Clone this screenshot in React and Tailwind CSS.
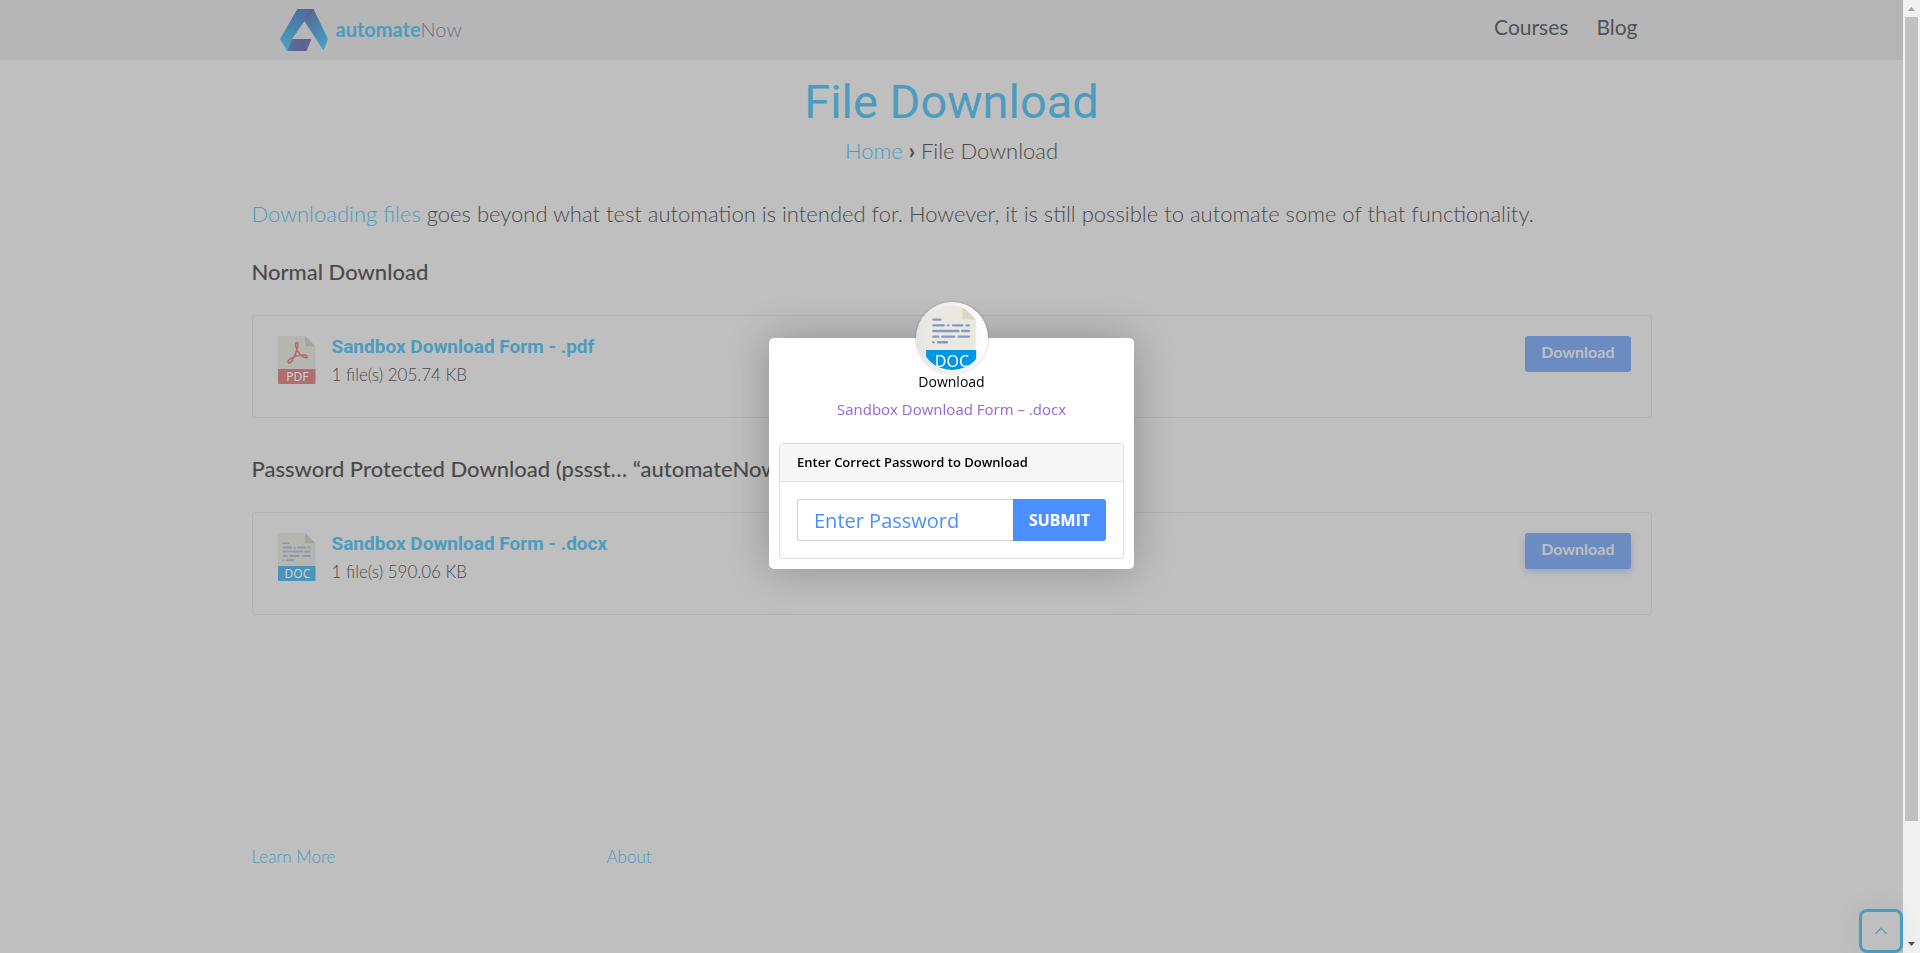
import React from 'react';

const lineRows = [
  'M5.4 10.2H10.6',
  'M5.4 14.5H13.2 M16.4 14.5H16.7 M20.2 14.5H27 M30.2 14.5H32',
  'M5.4 18.7H24.2 M27 18.7H32',
  'M5.4 23H9 M12.2 23H21 M24.4 23H32',
  'M5.4 27.2H5.5 M8.9 27.2H15.6',
];

function FileIcon({ kind, muted, className }) {
  const doc = kind === 'DOC';
  const paper = muted ? '#b5b6af' : '#e9e9e0';
  const fold = muted ? '#a5a49b' : '#d9d7ca';
  const ink = doc ? (muted ? '#8f96b0' : '#8697cb') : '#b66a6c';
  const band = doc ? (muted ? '#4b93ba' : '#0096e6') : '#b06e70';
  const label = muted ? '#cdd2d3' : '#ffffff';
  return (
    <svg viewBox="0 0 38 48" className={className} aria-hidden="true">
      <path d="M1.2 0H27.2L37.2 10.2V34H0V1.2Q0 0 1.2 0Z" fill={paper} />
      <path d="M27.2 0L37.2 10.2H27.2Z" fill={fold} />
      <path d="M0 33H37.5V46.8Q37.5 48 36.3 48H1.2Q0 48 0 46.8Z" fill={band} />
      {doc ? (
        <g stroke={ink} strokeWidth="1.8" strokeLinecap="round">
          {lineRows.map((d) => (
            <path key={d} d={d} />
          ))}
        </g>
      ) : (
        <path
          d="M19 6.6C17.4 6.6 17.3 8.4 17.9 10.6C18.6 14 21 17.6 24 20.1C25.8 21.5 28.6 22.2 29.1 20.9C29.5 19.5 26.7 18.7 23.8 19C19.8 19.3 15.6 20.7 12.8 22.4C10.8 23.7 9.7 25.4 10.2 26.5C10.9 27.9 13 26.8 14.4 24.1C16.2 20.9 18.6 15.6 19.5 11.6C20.1 9 20.3 6.8 19 6.6Z"
          fill="none"
          stroke={ink}
          strokeWidth="1.6"
          strokeLinejoin="round"
        />
      )}
      <text x="19.4" y="45.4" textAnchor="middle" fontSize="12" fontFamily="'Noto Sans', sans-serif" fill={label}>
        {kind}
      </text>
    </svg>
  );
}

function Logo() {
  return (
    <a href="#home" className="flex items-center gap-2">
      <svg viewBox="0 0 48 42" className="h-[42px] w-12" aria-hidden="true">
        <defs>
          <linearGradient id="armLeft" x1="0.7" y1="0" x2="0.2" y2="1">
            <stop offset="0" stopColor="#4c6e9c" />
            <stop offset="0.5" stopColor="#4787af" />
            <stop offset="1" stopColor="#4ba0c1" />
          </linearGradient>
          <linearGradient id="armRight" x1="0.2" y1="0" x2="0.7" y2="1">
            <stop offset="0" stopColor="#5c6492" />
            <stop offset="0.35" stopColor="#4c7ba6" />
            <stop offset="1" stopColor="#4a9fc1" />
          </linearGradient>
          <linearGradient id="foot" x1="0" y1="0.5" x2="1" y2="0.5">
            <stop offset="0" stopColor="#4c779f" />
            <stop offset="0.5" stopColor="#5a6695" />
            <stop offset="1" stopColor="#62628f" />
          </linearGradient>
        </defs>
        <path d="M33.5 0L48 30L43.5 41.5L24.5 12.2L26 4Z" fill="url(#armRight)" />
        <path d="M17.3 0H33.5L24.5 12.2L12 30L7 41.7L0 30Z" fill="url(#armLeft)" />
        <path d="M33.5 0L24.5 12.2L26 7.5L31 0Z" fill="#5d5f8f" />
        <path d="M12 30H31.5L26.5 42H7Z" fill="url(#foot)" />
      </svg>
      <span className="pb-0.5 text-[20px] leading-6 font-light text-[#6d6d86]">
        <b className="font-bold text-[#4b9dbe]">automate</b>Now
      </span>
    </a>
  );
}

function DownloadCard({ kind, name, meta, raised }) {
  return (
    <article className="flex h-[103px] items-start rounded-[3px] border border-[#b3b3b3] py-5 pr-5 pl-[25px]">
      <FileIcon kind={kind} muted className="h-12 w-[38px]" />
      <div className="-mt-1 ml-4 flex-1">
        <h3 className="pt-px font-[Roboto] text-[19px] leading-7 font-bold">
          <a href={'#' + kind} className="text-[#4b9cbe]">{name}</a>
        </h3>
        <p className="text-[17px] leading-7 font-light">{meta}</p>
      </div>
      <button
        type="button"
        className={
          raised
            ? 'h-9 rounded-[3px] bg-[#6b8cc2] px-4 pb-1 text-base leading-6 font-bold text-[#bfbfbf] shadow-[0_3px_6px_rgba(80,115,190,0.35)]'
            : 'h-9 rounded-[3px] bg-[#6b8cc2] px-4 pb-1 text-base leading-6 font-bold text-[#bfbfbf]'
        }
      >
        Download
      </button>
    </article>
  );
}

function PasswordDialog() {
  return (
    <div className="fixed inset-y-0 right-[17px] left-0 flex items-center justify-center font-['Open_Sans',sans-serif]">
      <div
        role="dialog"
        aria-labelledby="dialog-title"
        className="mb-[46px] flex w-[365px] flex-col rounded-[5px] bg-white px-[10px] pb-[10px] shadow-[0_0_40px_rgba(0,0,0,0.25)]"
      >
        <div className="-mt-9 flex size-[72px] self-center rounded-full bg-linear-to-r from-[#e4e4e4] to-white p-1 shadow-[0_0_3px_rgba(0,0,0,0.25)]">
          <div className="flex size-16 justify-center overflow-hidden rounded-full">
            <FileIcon kind="DOC" className="h-16 w-[51px]" />
          </div>
        </div>
        <p className="-mt-0.5 text-center text-sm leading-5 text-black">Download</p>
        <h2 id="dialog-title" className="mt-[7px] text-center text-[15px] leading-5 text-[#9467d6]">
          Sandbox Download Form – .docx
        </h2>
        <form className="mt-6 rounded-[3px] border border-[#dfdfdf]" onSubmit={(e) => e.preventDefault()}>
          <label
            htmlFor="password"
            className="block border-b border-[#dfdfdf] bg-[#f7f7f7] px-[17px] pt-2 pb-[9px] text-[13px] leading-5 font-semibold text-black"
          >
            Enter Correct Password to Download
          </label>
          <div className="flex p-[17px]">
            <input
              id="password"
              type="password"
              placeholder="Enter Password"
              className="h-[42px] min-w-0 flex-1 rounded-l-[3px] border border-r-0 border-[#ced4da] bg-white px-4 text-xl placeholder:text-[#4a8eff]"
            />
            <button type="submit" className="h-[42px] rounded-r-[3px] bg-[#4a8eff] px-4 text-base font-bold text-white">
              SUBMIT
            </button>
          </div>
        </form>
      </div>
    </div>
  );
}

function Scrollbar() {
  return (
    <div className="sticky top-0 flex h-screen w-[17px] flex-col items-center bg-[#f1f1f1]" aria-hidden="true">
      <svg viewBox="0 0 17 17" className="size-[17px]">
        <path d="M5 11L8.5 7L12 11Z" fill="#a3a3a3" />
      </svg>
      <div className="w-[13px] grow-[804] bg-[#c1c1c1]" />
      <div className="grow-[115]" />
      <svg viewBox="0 0 17 17" className="size-[17px]">
        <path d="M5 6L8.5 10L12 6Z" fill="#505050" />
      </svg>
    </div>
  );
}

export default function App() {
  return (
    <div className="flex bg-[#bfbfbf] font-[Lato,sans-serif] text-[#4a4a4a]">
      <div className="flex min-h-screen flex-1 flex-col">
        <header className="bg-[#b6b6b6]">
          <div className="mx-auto flex h-[60px] max-w-[1400px] items-center justify-between pr-[14px] pl-7">
            <Logo />
            <nav className="flex gap-7 pb-1.5 text-[21px] leading-8 font-normal text-[#4d5357]">
              <a href="#courses">Courses</a>
              <a href="#blog">Blog</a>
            </nav>
          </div>
        </header>

        <main className="mx-auto w-full max-w-[1400px] text-[22px] leading-8">
          <h1 className="mt-[14px] text-center font-[Roboto] text-[47px] leading-[56px] text-[#4b9cbe]">File Download</h1>
          <p className="mt-[5px] text-center font-light">
            <a href="#home" className="text-[#4b9cbe]">Home</a> <span className="font-bold">›</span> File Download
          </p>
          <p className="mt-[31px] font-light">
            <a href="#files" className="text-[#4b9cbe]">Downloading files</a> goes beyond what test automation is intended
            for. However, it is still possible to automate some of that functionality.
          </p>
          <h2 className="mt-[26px] mb-[27px] font-medium">Normal Download</h2>
          <DownloadCard kind="PDF" name="Sandbox Download Form - .pdf" meta="1 file(s) 205.74 KB" />
          <h2 className="mt-[35px] mb-[27px] font-medium">Password Protected Download (pssst… “automateNow”)</h2>
          <DownloadCard kind="DOC" name="Sandbox Download Form - .docx" meta="1 file(s) 590.06 KB" raised />
        </main>

        <footer className="mx-auto mt-auto grid w-full max-w-[1400px] grid-cols-4 gap-5 pt-10 pb-[82px] text-[17px] leading-7 font-light text-[#4b9cbe]">
          <a href="#learn">Learn More</a>
          <a href="#about">About</a>
        </footer>
      </div>

      <Scrollbar />

      <button
        type="button"
        aria-label="Back to top"
        className="fixed right-[17px] bottom-0 flex size-11 items-center justify-center rounded-lg border-3 border-[#4b9cbe] shadow-[0_0_30px_rgba(0,0,0,0.06)]"
      >
        <svg viewBox="0 0 12 8" className="h-2 w-3" aria-hidden="true">
          <path d="M0.5 6.8L6 1.2L11.5 6.8" fill="none" stroke="#4b9cbe" strokeWidth="1.2" />
        </svg>
      </button>

      <PasswordDialog />
    </div>
  );
}
